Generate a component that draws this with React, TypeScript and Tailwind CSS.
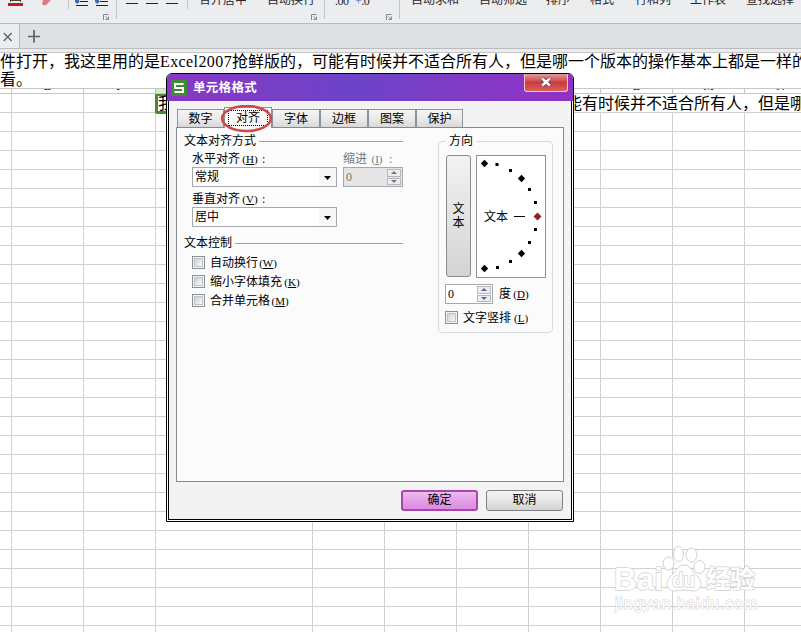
import type { ReactNode } from 'react';

const SONG = "font-['Liberation_Serif','Noto_Sans_CJK_SC',serif]";

const columns = [
  { name: 'D', width: 'w-[12px]' },
  { name: 'E', width: 'w-[72px]' },
  { name: 'F', width: 'w-[72px]' },
  { name: 'G', width: 'w-[157px]' },
  { name: 'H', width: 'w-[72px]' },
  { name: 'I', width: 'w-[72px]' },
  { name: 'J', width: 'w-[72px]' },
  { name: 'K', width: 'w-[72px]' },
  { name: 'L', width: 'w-[72px]' },
  { name: 'M', width: 'w-[72px]' },
  { name: 'N', width: 'w-[72px]' },
];

const rows = Array.from({ length: 29 }, (_, i) => i);

const tabs = [
  { label: '数字', width: 'w-[47px]' },
  { label: '对齐', width: 'w-[48px]', active: true },
  { label: '字体', width: 'w-[48px]' },
  { label: '边框', width: 'w-[48px]' },
  { label: '图案', width: 'w-[48px]' },
  { label: '保护', width: 'w-[47px]' },
];

function Launcher() {
  return (
    <svg className="mb-[3px] h-[6px] w-[6px] self-end" viewBox="0 0 6 6" fill="none" stroke="#85878c">
      <path d="M.5 6V.5H5.5M5.5 2.5v3h-3M2.5 2.5l2.5 2.5" />
    </svg>
  );
}

function Separator({ tall }: { tall?: boolean }) {
  return <div className={tall ? 'h-[19px] w-px bg-[#c3c5c8]' : 'h-[9px] w-px bg-[#c3c5c8]'} />;
}

function RibbonText({ children, className }: { children: ReactNode; className: string }) {
  return <span className={`-mt-[8px] whitespace-nowrap leading-[16px] ${className}`}>{children}</span>;
}

function Ribbon() {
  return (
    <div className="flex h-[23px] shrink-0 items-start overflow-hidden bg-[#ecedef] text-[12px] text-[#26282c]">
      <svg className="h-[7px] w-[60px] shrink-0" viewBox="0 0 60 7">
        <path d="M10.500 0v2M20.500 0v2M10 .5h11" stroke="#444" />
        <path d="M8 3h15v3H8z" fill="#c01a1e" />
        <path d="M43 0h8l-5 5q-3 1-4-1z" fill="#df7a80" />
      </svg>
      <div className="ml-[8px]"><Separator /></div>
      <svg className="ml-[5px] h-[7px] w-[36px] shrink-0" viewBox="0 0 36 7">
        <path d="M1 0h4v1h1L3.500 4 1 2zM21 0h4v1h1L23.500 4 21 2z" fill="#4169ad" />
        <path d="M6 1.500h8M2 5.500h12M26 1.500h8M22 5.500h12" stroke="#222" />
      </svg>
      <div className="-ml-[7px] flex h-[23px]"><Launcher /></div>
      <div className="ml-[7px]"><Separator tall /></div>
      <svg className="ml-[9px] h-[5px] w-[53px] shrink-0" viewBox="0 0 53 5">
        <path d="M0 3.500h12M20 3.500h12M40 3.500h12" stroke="#222" />
      </svg>
      <div className="ml-[8px]"><Separator /></div>
      <RibbonText className="ml-[11px] w-[48px]">合并居中</RibbonText>
      <RibbonText className="ml-[20px] w-[48px]">自动换行</RibbonText>
      <div className="-ml-[4px] flex h-[23px]"><Launcher /></div>
      <div className="ml-[7px]"><Separator tall /></div>
      <RibbonText className="ml-[10px] w-[14px] pt-px tracking-[-0.5px]">.00</RibbonText>
      <RibbonText className="ml-[6px] w-[16px] pt-px tracking-[-0.5px]">
        <span className="text-[#4169c5]">+</span>.0
      </RibbonText>
      <div className="ml-[15px] flex h-[23px]"><Launcher /></div>
      <div className="ml-[7px]"><Separator tall /></div>
      <RibbonText className="ml-[11px] w-[48px]">自动求和</RibbonText>
      <RibbonText className="ml-[20px] w-[48px]">自动筛选</RibbonText>
      <RibbonText className="ml-[19px] w-[24px]">排序</RibbonText>
      <RibbonText className="ml-[20px] w-[24px]">格式</RibbonText>
      <RibbonText className="ml-[21px] w-[36px]">行和列</RibbonText>
      <RibbonText className="ml-[19px] w-[36px]">工作表</RibbonText>
      <RibbonText className="ml-[20px] w-[48px]">查找选择</RibbonText>
    </div>
  );
}

function DocumentTabs() {
  return (
    <div className="flex h-[26px] shrink-0 border-y border-[#b9bbbe] bg-[#dfe0e4]">
      <div className="flex w-[20px] items-center border-r border-[#b9bbbe] bg-[#ecedef]">
        <svg className="ml-[3px] mt-[2px] h-[10px] w-[10px]" viewBox="0 0 10 10" stroke="#5b6270" strokeWidth="1.300">
          <path d="M.7 1l8 8M8.700 1l-8 8" />
        </svg>
      </div>
      <svg className="ml-[8px] mt-[6px] h-[13px] w-[13px]" viewBox="0 0 13 13" stroke="#5b6270" strokeWidth="1.700">
        <path d="M6 0v12.500M0 6.500h12" />
      </svg>
    </div>
  );
}

function Sheet() {
  return (
    <div className="flex flex-1 flex-col bg-white">
      <div className="flex h-[6px] shrink-0 overflow-hidden border-y border-[#c6c6c6] text-[12px] leading-[12px]">
        {columns.map((c) => (
          <div
            key={c.name}
            className={`${c.width} h-[4px] shrink-0 overflow-hidden border-r border-[#c6c6c6] text-center ${c.name === 'G' ? 'bg-[#d9ead0]' : ''}`}
          >
            <span className="-mt-[9px] block">{c.name === 'D' || c.name === 'G' ? '' : c.name}</span>
          </div>
        ))}
      </div>
      {rows.map((r) => (
        <div key={r} className="flex h-[19px] shrink-0">
          {r === 0 ? (
            <>
              <div className="w-[12px] shrink-0 border-b border-r border-[#d0d0d0]" />
              <div className="w-[72px] shrink-0 border-b border-r border-[#d0d0d0]" />
              <div className="w-[71px] shrink-0 border-b border-[#d0d0d0]" />
              <div className="h-[20px] w-[411px] shrink-0 border-[3px] border-t-2 border-[#4a8a32] text-[16px] leading-[16px]">我</div>
              <div className="flex-1 overflow-hidden whitespace-nowrap border-b border-[#d0d0d0] text-[16px] leading-[20px]">
                能有时候并不适合所有人，但是哪
              </div>
            </>
          ) : (
            columns.map((c) => (
              <div key={c.name} className={`${c.width} shrink-0 border-b border-r border-[#d0d0d0]`} />
            ))
          )}
        </div>
      ))}
    </div>
  );
}

function Key({ children }: { children: string }) {
  return (
    <span className="inline-block w-[18px] text-center text-[11px]">
      (<span className="underline underline-offset-1">{children}</span>)
    </span>
  );
}

function Rule({ children }: { children: string }) {
  return (
    <div className="flex h-[14px] items-center gap-[3px] leading-[14px]">
      {children}
      <div className="h-px flex-1 bg-[#a0a0a0]" />
    </div>
  );
}

function Select({ value }: { value: string }) {
  return (
    <div className="flex h-[20px] w-[145px] border border-[#a3a9ae] bg-white pl-[2px] leading-[18px]">
      <span className="flex-1">{value}</span>
      <div className="flex w-[17px] items-center justify-center bg-[#f7f7f7]">
        <svg className="mt-[2px] h-[4px] w-[7px]" viewBox="0 0 7 4">
          <path d="M0 0h7L3.500 4z" fill="#000" />
        </svg>
      </div>
    </div>
  );
}

function Spinner({ disabled, className }: { disabled?: boolean; className: string }) {
  const arrow = disabled ? '#777777' : '#5a6599';
  return (
    <div
      className={`flex h-[20px] border border-[#a3a9ae] pl-[2px] leading-[18px] ${disabled ? 'bg-[#e6e6e6] text-[#777]' : 'bg-white'} ${className}`}
    >
      <span className="flex-1">0</span>
      <div className="flex w-[15px] flex-col gap-px py-px pr-px">
        <div className="flex flex-1 items-center justify-center border border-[#b4b7bb] bg-[#eeeef0]">
          <svg className="h-[3px] w-[6px]" viewBox="0 0 6 3"><path d="M0 3h6L3 0z" fill={arrow} /></svg>
        </div>
        <div className="flex flex-1 items-center justify-center border border-[#b4b7bb] bg-[#eeeef0]">
          <svg className="h-[3px] w-[6px]" viewBox="0 0 6 3"><path d="M0 0h6L3 3z" fill={arrow} /></svg>
        </div>
      </div>
    </div>
  );
}

function Checkbox({ label, hotkey }: { label: string; hotkey: string }) {
  return (
    <div className="flex h-[19px] items-center gap-[5px]">
      <div className="h-[13px] w-[13px] border border-[#8c9196] bg-[#f4f4f4] p-px">
        <div className="h-full w-full border border-[#bfc3c9] bg-linear-to-br from-[#cdd0d5] to-[#fafafa]" />
      </div>
      <span className="leading-[14px]">
        {label}
        <span className="ml-px"><Key>{hotkey}</Key></span>
      </span>
    </div>
  );
}

const dots = [
  [21, 9.5], [34.5, 15.5], [53.5, 34.5], [59.5, 47.5],
  [59.5, 74.5], [53.5, 87.5], [34.5, 106.5], [21.5, 112.5],
];
const diamonds = [[8.5, 8.5], [45.5, 23.5], [45.5, 98.5], [8.5, 113.5]];

function Dial() {
  return (
    <div className="relative flex h-[123px] w-[70px] items-center border border-[#8f9295] bg-white pl-[7px]">
      <span className="leading-[14px]">文本</span>
      <svg className="absolute -left-px -top-px h-[123px] w-[70px]" viewBox="0 0 70 123">
        {dots.map(([x, y]) => (
          <rect key={`${x}-${y}`} x={x - 1.5} y={y - 1.5} width="3" height="3" />
        ))}
        {diamonds.map(([x, y]) => (
          <path key={`${x}-${y}`} d={`M${x} ${y - 3.7}l3.700 3.700-3.700 3.700-3.700-3.700z`} />
        ))}
        <path d="M61.500 57.500l4 4-4 4-4-4z" fill="#8e2323" />
        <path d="M38 61.500h11" stroke="#000" />
      </svg>
    </div>
  );
}

function FormatCellsDialog() {
  return (
    <div className="absolute left-[166px] top-[73px] flex h-[449px] w-[408px] flex-col overflow-hidden rounded-t-[6px] border border-black bg-white text-[12px] text-black">
      <div className="flex h-[27px] shrink-0 items-center bg-linear-to-r from-[#8936c4] via-[#6b44c8] via-45% to-[#9230c4]">
        <svg className="ml-[4px] h-[16px] w-[16px]" viewBox="0 0 16 16">
          <rect width="16" height="16" rx="1" fill="#3f8a36" />
          <path d="M12.500 4H4v4h8v4H3.500" fill="none" stroke="#fff" strokeWidth="2" />
        </svg>
        <span className="ml-[6px] flex-1 pt-[2px] text-[12.5px] font-bold tracking-[0.3px] text-white">单元格格式</span>
        <div className="mr-[5px] flex h-[18px] w-[44px] items-center justify-center self-start rounded-b-[3px] border border-t-0 border-[#efc6d8] bg-linear-to-b from-[#e09a9c] via-[#ca3a3e] via-50% to-[#d8605c]">
          <svg className="-mt-px h-[10px] w-[12px]" viewBox="0 0 12 10">
            <path d="M2.200 1.500l7.600 7M9.800 1.500l-7.600 7" stroke="#6c3840" strokeWidth="4.400" />
            <path d="M2.200 1.500l7.600 7M9.800 1.500l-7.600 7" stroke="#fff" strokeWidth="2.500" />
          </svg>
        </div>
      </div>

      <div className="mx-px mb-px flex flex-1 flex-col border border-t-0 border-black bg-[#f3f3f3] px-[7px] pt-[6px]">
        <div className="relative z-10 -mb-px flex h-[21px] items-end pl-px">
          {tabs.map((t) =>
            t.active ? (
              <div key={t.label} className={`${t.width} relative h-[21px] border border-b-0 border-[#8f9295] bg-[#fbfbfb] px-[3px] pt-[2px]`}>
                <div className="h-[16px] border border-dotted border-black text-center leading-[15px]">{t.label}</div>
                <svg className="absolute -left-[5px] -top-[3px] h-[30px] w-[54px]" viewBox="0 0 54 30" fill="none">
                  <ellipse cx="26.500" cy="13.500" rx="24.300" ry="12.500" stroke="#cb4b4d" strokeWidth="2.600" />
                </svg>
              </div>
            ) : (
              <div
                key={t.label}
                className={`${t.width} mb-px h-[18px] border border-b-0 border-[#8f9295] bg-linear-to-b from-[#f4f4f4] via-[#ececec] via-45% to-[#d8d8d8] text-center leading-[18px]`}
              >
                {t.label}
              </div>
            ),
          )}
        </div>

        <div className="flex h-[355px] w-[388px] border border-[#858a8d] bg-[#fbfbfb] pl-[7px] pt-[6px]">
          <div className="w-[219px]">
            <Rule>文本对齐方式</Rule>
            <div className="ml-[8px] mt-[4px] flex h-[15px] leading-[14px]">
              <div className="w-[151px]">水平对齐<span className="ml-px"><Key>H</Key> :</span></div>
              <div className="text-[#777]">缩进<span className="ml-px"><Key>I</Key> :</span></div>
            </div>
            <div className="ml-[8px] flex justify-between">
              <Select value="常规" />
              <Spinner disabled className="w-[60px]" />
            </div>
            <div className="ml-[8px] mt-[5px] h-[15px] leading-[14px]">垂直对齐<span className="ml-px"><Key>V</Key> :</span></div>
            <div className="ml-[8px]"><Select value="居中" /></div>
            <div className="mt-[9px]"><Rule>文本控制</Rule></div>
            <div className="ml-[8px] mt-[3px]">
              <Checkbox label="自动换行" hotkey="W" />
              <Checkbox label="缩小字体填充" hotkey="K" />
              <Checkbox label="合并单元格" hotkey="M" />
            </div>
          </div>

          <fieldset className="ml-[35px] h-[199px] w-[115px] rounded-[4px] border border-[#d5dcdf] pl-[6px]">
            <legend className="ml-[1px] px-[3px] leading-[14px]">方向</legend>
            <div className="ml-px mt-[7px] flex gap-[5px]">
              <div className="flex h-[122px] w-[25px] items-center justify-center rounded-[3px] border border-[#898b8e] bg-linear-to-b from-[#f2f2f2] to-[#d4d4d4]">
                <span className="w-[12px] leading-[14px]">文本</span>
              </div>
              <Dial />
            </div>
            <div className="mt-[6px] flex items-center gap-[6px]">
              <Spinner className="w-[48px]" />
              <span className="leading-[14px]">度<span className="ml-px"><Key>D</Key></span></span>
            </div>
            <div className="mt-[4px]"><Checkbox label="文字竖排" hotkey="L" /></div>
          </fieldset>
        </div>

        <div className="mt-[8px] flex justify-end gap-[8px] pr-px">
          <button className="h-[21px] w-[77px] rounded-[3px] border-2 border-[#aa45ad] bg-linear-to-b from-[#edbdf0] via-[#e5a0e8] via-45% to-[#dc8de0] leading-[17px]">
            确定
          </button>
          <button className="h-[21px] w-[77px] rounded-[3px] border border-[#7e8285] bg-linear-to-b from-[#f3f3f3] via-[#e9e9e9] via-45% to-[#d3d3d3] leading-[19px]">
            取消
          </button>
        </div>
      </div>
    </div>
  );
}

function Watermark() {
  return (
    <div className="absolute left-[614px] top-[545px] h-[70px] w-[146px] font-['Liberation_Sans','Noto_Sans_CJK_SC',sans-serif]">
      <svg className="h-[70px] w-[146px]" viewBox="0 0 146 70" fill="#fff" stroke="#d2d2d2">
        <ellipse cx="54.500" cy="18.500" rx="5.500" ry="6.500" />
        <ellipse cx="64.500" cy="9" rx="5" ry="7.500" />
        <ellipse cx="77.500" cy="10" rx="5.500" ry="7" />
        <ellipse cx="85.500" cy="22" rx="5.500" ry="6.500" />
        <path d="M70 20c-7 0-8 7-13 11-7 6-4 15 3 15 4 0 7-1 10-1s6 1 10 1c7 0 10-9 3-15-5-4-6-11-13-11z" />
        <g fontWeight="bold" paintOrder="stroke" strokeWidth="1.500">
          <text x="0" y="45" fontSize="32" textLength="49" lengthAdjust="spacingAndGlyphs">Bai</text>
          <text x="58" y="42" fontSize="20" textLength="23" lengthAdjust="spacingAndGlyphs">du</text>
          <text x="92" y="43" fontSize="25" textLength="49">经验</text>
          <text x="1" y="64" fontSize="16" strokeWidth="1" fontWeight="normal" textLength="142">jingyan.baidu.com</text>
        </g>
      </svg>
    </div>
  );
}

export default function App() {
  return (
    <div className={`relative flex h-[632px] w-[801px] flex-col overflow-hidden bg-white text-black ${SONG}`}>
      <Ribbon />
      <DocumentTabs />
      <div className="h-[39px] shrink-0 overflow-hidden border-t-[3px] border-[#ececee] bg-white">
        <div className="whitespace-nowrap border-t border-[#c6c6c6] text-[16px] leading-[18px]">
          件打开，我这里用的是<span className="tracking-[0.4px]">Excel2007</span>抢鲜版的，可能有时候并不适合所有人，但是哪一个版本的操作基本上都是一样的
          <br />
          看。
        </div>
      </div>
      <Sheet />
      <FormatCellsDialog />
      <Watermark />
    </div>
  );
}
